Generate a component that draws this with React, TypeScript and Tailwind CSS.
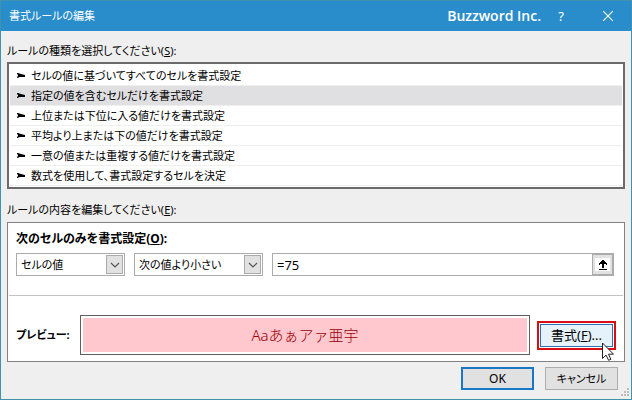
import { useState } from 'react';

const ruleTypes = [
  'セルの値に基づいてすべてのセルを書式設定',
  '指定の値を含むセルだけを書式設定',
  '上位または下位に入る値だけを書式設定',
  '平均より上または下の値だけを書式設定',
  '一意の値または重複する値だけを書式設定',
  '数式を使用して、書式設定するセルを決定',
];

function Select({ label, options, className }: { label: string; options: string[]; className: string }) {
  return (
    <div className={`relative h-[23px] shrink-0 ${className}`}>
      <select
        aria-label={label}
        className="block h-full w-full appearance-none border border-[#ababab] bg-white pl-1 pr-5 outline-none"
      >
        {options.map(option => (
          <option key={option}>{option}</option>
        ))}
      </select>
      <span className="pointer-events-none absolute inset-y-0.5 right-0.5 flex w-[17px] items-center justify-center border border-[#ababab] bg-[#e1e1e1]">
        <svg className="h-[6px] w-[10px]" viewBox="0 0 10 6" fill="none" stroke="#555" strokeWidth="1.2">
          <path d="M1 1l4 4 4-4" />
        </svg>
      </span>
    </div>
  );
}

export default function App() {
  const [selected, setSelected] = useState(1);
  const [value, setValue] = useState('=75');

  return (
    <div className="flex min-h-screen flex-col border border-[#3f93ac] bg-[#efefef] font-['Noto_Sans','Noto_Sans_CJK_JP',sans-serif] text-[11px] leading-[16px] text-black [font-feature-settings:'palt']">
      <header className="flex h-[30px] items-center bg-[#2a8dcb] pl-2 text-white">
        <h1 className="flex-1">書式ルールの編集</h1>
        <span className="font-['Open_Sans',sans-serif] text-[14px] font-semibold">Buzzword Inc.</span>
        <button type="button" aria-label="ヘルプ" className="ml-2 h-full w-6 text-[13px]">?</button>
        <button type="button" aria-label="閉じる" className="ml-3 flex h-full w-[46px] items-center justify-center">
          <svg className="h-[10px] w-[10px]" viewBox="0 0 10 10" stroke="white" strokeWidth="1.1">
            <path d="M0 0l10 10M10 0L0 10" />
          </svg>
        </button>
      </header>

      <main className="flex flex-1 flex-col pl-[6px] pr-[6px] pt-3">
        <p id="rule-type">ルールの種類を選択してください(<u>S</u>):</p>
        <ul
          role="listbox"
          aria-labelledby="rule-type"
          className="mt-[3px] border-2 border-[#6b6b6b] bg-white px-px pb-px pt-[2px]"
        >
          {ruleTypes.map((rule, i) => (
            <li key={rule} role="option" aria-selected={i === selected}>
              <button
                type="button"
                onClick={() => setSelected(i)}
                className={`flex h-5 w-full items-center gap-[6px] border-b border-[#efefef] pl-[7px] text-left ${i === selected ? 'bg-[#e0dfe2]' : ''}`}
              >
                <svg className="h-[5px] w-[8px]" viewBox="0 0 8 5">
                  <path d="M0 0h1l3 1 4 1v2H3l-3 1V4l1-1V2L0 1z" />
                </svg>
                {rule}
              </button>
            </li>
          ))}
        </ul>

        <p id="rule-body" className="mt-[13px]">ルールの内容を編集してください(<u>E</u>):</p>
        <section aria-labelledby="rule-body" className="mt-1 border border-[#828282] bg-white px-px pb-[6px] pt-2">
          <h2 className="pl-[7px] text-[12px] font-bold">次のセルのみを書式設定(<u>O</u>):</h2>
          <div className="mt-[6px] flex pl-[7px] pr-[9px]">
            <Select label="対象" options={['セルの値', '特定の文字列', '日付', '空白']} className="w-[109px]" />
            <Select
              label="条件"
              options={['次の値より小さい', '次の値より大きい', '次の値に等しい']}
              className="ml-[9px] w-[129px]"
            />
            <div className="ml-[9px] flex h-[23px] flex-1 border border-[#ababab]">
              <input
                aria-label="値"
                value={value}
                onChange={e => setValue(e.target.value)}
                className="min-w-0 flex-1 pl-1 text-[13px] outline-none"
              />
              <button
                type="button"
                aria-label="セル範囲を選択"
                className="flex w-[21px] items-center justify-center border border-[#ababab] bg-[#e1e1e1]"
              >
                <span className="flex h-[13px] w-[15px] items-center justify-center bg-white">
                  <svg className="h-[10px] w-[8px]" viewBox="0 0 8 10" shapeRendering="crispEdges">
                    <path d="M3 0h2v1h1v1h1v1h1v2H7V4H5v4H3V4H1v1H0V3h1V2h1V1h1zM0 9h8v1H0z" />
                  </svg>
                </span>
              </button>
            </div>
          </div>

          <hr className="mt-[19px] border-[#c3c3c3]" />

          <div className="mt-[19px] flex items-center pl-[7px] pr-[7px]">
            <span className="w-16 shrink-0 font-bold">プレビュー:</span>
            <div className="h-10 flex-1 border border-[#5f5f5f] p-[2px]">
              <div className="flex h-full items-center justify-center bg-[#ffc7ce] text-[15px] font-light text-[#9c0006] [font-feature-settings:normal]">
                Aaあぁアァ亜宇
              </div>
            </div>
            <div className="relative ml-[7px] border-2 border-[#d90d12] bg-white p-px">
              <button type="button" className="block h-[23px] w-[73px] border border-[#2a72b5] bg-[#e5f1fb] text-[13px]">
                書式(<u>F</u>)...
              </button>
              <svg className="pointer-events-none absolute -bottom-[13px] right-0 h-[19px] w-[12px]" viewBox="0 0 12 19">
                <path
                  d="M.5 1v15.5l3.6-3.4 2.5 5.2 2.3-1-2.4-5.1h5z"
                  fill="white"
                  stroke="#222"
                  strokeLinejoin="round"
                />
              </svg>
            </div>
          </div>
        </section>

        <footer className="flex justify-end gap-[11px] pr-[7px] pt-[5px]">
          <button type="button" className="h-[23px] w-[73px] border-2 border-[#1877c9] bg-[#e1e1e1] text-[12px]">OK</button>
          <button type="button" className="h-[23px] w-[73px] border border-[#adadad] bg-[#e1e1e1]">キャンセル</button>
        </footer>
        <svg className="-mt-0.5 ml-auto -mr-1 h-[8px] w-[8px]" viewBox="0 0 8 8" fill="#bcbcbc">
          <path d="M6 0h2v2H6zM3 3h2v2H3zM6 3h2v2H6zM0 6h2v2H0zM3 6h2v2H3zM6 6h2v2H6z" />
        </svg>
      </main>
    </div>
  );
}
